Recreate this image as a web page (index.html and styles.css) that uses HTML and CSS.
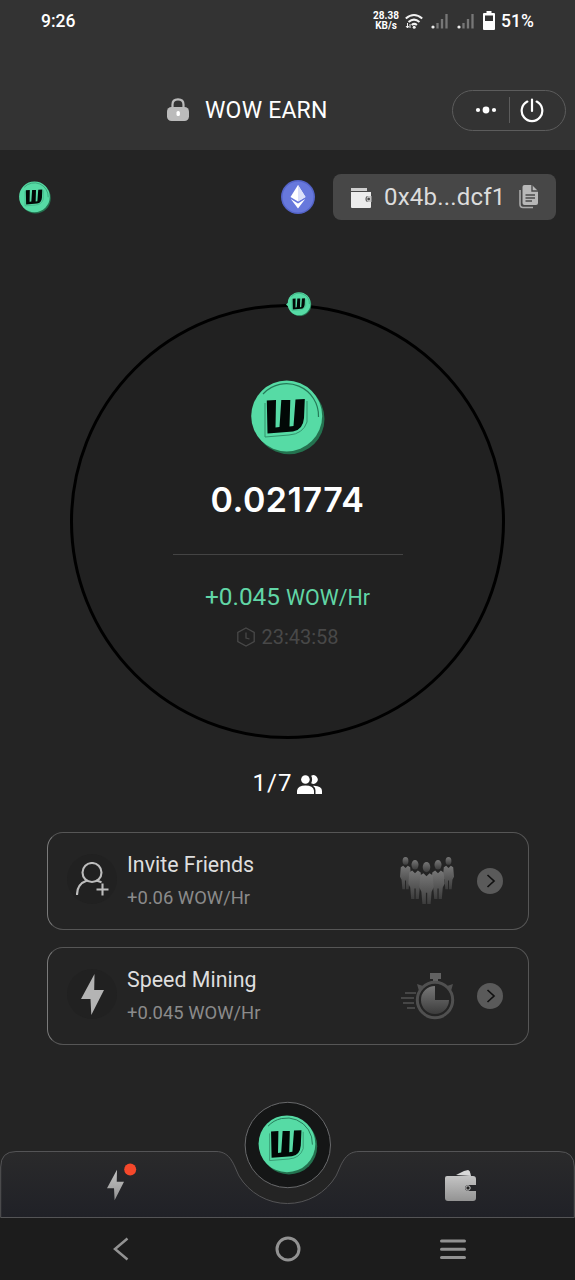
FILE: index.html
```
<!DOCTYPE html>
<html lang="en">
<head>
<meta charset="utf-8">
<title>WOW EARN</title>
<link rel="stylesheet" href="styles.css">
</head>
<body>
<svg class="defs" width="0" height="0" aria-hidden="true">
  <defs>
    <linearGradient id="fade" x1="0" y1="0" x2="0" y2="1"><stop offset="0" stop-color="#777"/><stop offset="1" stop-color="#3c3c3c"/></linearGradient>
    <linearGradient id="silver" x1="0" y1="0" x2="0" y2="1"><stop offset="0" stop-color="#c4c4c4"/><stop offset="1" stop-color="#939393"/></linearGradient>
    <linearGradient id="panel" x1="0" y1="0" x2="0" y2="1"><stop offset="0" stop-color="#2a2a2b"/><stop offset="1" stop-color="#202127"/></linearGradient>
    <symbol id="coin" viewBox="0 0 74 75">
      <circle cx="38.2" cy="39" r="35.3" fill="#24724f"/>
      <circle cx="35.7" cy="36" r="35.5" fill="#56dba5"/>
      <path d="M12 14A32 32 0 0 1 67.5 37" fill="none" stroke="#257a58" stroke-width="1.2"/>
      <path d="M14 23V57L38 55Q52 54 56 42V21" fill="none" stroke="#32916b" stroke-width="1"/>
      <path d="M15.8 20.5L25 20L24.5 47.5L28.5 47L30.3 20H39.3L38.5 46.5L42.5 46L44.5 19.5L53.8 19L53 38Q52 50 42 51.5L16.5 53.5Z" fill="#020806"/>
    </symbol>
    <symbol id="bolt" viewBox="0 0 23 41"><path d="M13.5 0L0 25H9.5L10.3 41L23 16H13.2Z"/></symbol>
    <symbol id="man" viewBox="0 0 14 42"><ellipse cx="7" cy="5" rx="3.7" ry="5"/><path d="M4 11L7 14L10 11L13 13L14 25L12 29L11 41H7.7V30H6.4V41H3L2 29L0 25L1 13Z"/></symbol>
    <symbol id="bars" viewBox="0 0 17 16"><circle cx="2" cy="14" r="1.6" fill="#eee"/><path d="M6.5 15.5V10M11 15.5V6M15.5 15.5V1" stroke="#777" stroke-width="2.3"/></symbol>
  </defs>
</svg>
<header class="top">
  <div class="status">
    <span class="time">9:26</span>
    <span class="rate"><span>28.38</span><span>KB/s</span></span>
    <svg class="wifi" viewBox="0 0 18 17" width="18" height="17"><path d="M.8 5.5Q9-1.5 17.2 5.5M3.5 9Q9 4.2 14.5 9M6.7 12Q9.3 9.8 11.9 12" fill="none" stroke="#f2f2f2" stroke-width="2"/><circle cx="9.2" cy="14.3" r="1.5" fill="#f2f2f2"/><path d="M2.5 10V15M1 13L2.5 15L4 13M5 15V11" fill="none" stroke="#f2f2f2"/></svg>
    <svg class="sig" width="17" height="16"><use href="#bars"/></svg>
    <svg class="sig two" width="17" height="16"><use href="#bars"/></svg>
    <svg class="battery" viewBox="0 0 12 19" width="12" height="19"><path d="M3.5 0H8.5V2H11Q12 2 12 3V18Q12 19 11 19H1Q0 19 0 18V3Q0 2 1 2H3.5Z" fill="#fff"/><path d="M2 4.5H10V10H2Z" fill="#333"/></svg>
    <span class="percent">51%</span>
  </div>
  <div class="title">
    <svg class="lock" viewBox="0 0 22 24" width="22" height="24"><path d="M5.5 11V6.5Q5.5 1.3 11 1.3T16.5 6.5V11" fill="none" stroke="#bbb" stroke-width="2.2"/><rect y="9" width="22" height="14" rx="4.5" fill="#bbb"/><rect x="9.5" y="13" width="3.4" height="5" rx="1.5" fill="#fff"/></svg>
    <h1>WOW EARN</h1>
    <div class="capsule">
      <svg viewBox="0 0 22 10" width="22" height="10" fill="#fff"><circle cx="3" cy="5" r="2.1"/><circle cx="11" cy="5" r="3.4"/><circle cx="19" cy="5" r="2.1"/></svg>
      <i></i>
      <svg viewBox="0 0 24 25" width="24" height="25" fill="none" stroke="#fff" stroke-width="2.2" stroke-linecap="round"><path d="M7.3 3.6A10.3 10.3 0 1 0 16.7 3.6M12 1.5V13"/></svg>
    </div>
  </div>
</header>
<main>
  <div class="account">
    <svg class="brand" width="32" height="33"><use href="#coin"/></svg>
    <svg class="eth" viewBox="0 0 34 34" width="34" height="34"><circle cx="17" cy="17" r="17" fill="#5363c7"/><circle cx="17" cy="17" r="15.5" fill="#6778dc"/><path d="M17 5L24.5 17L17 21.5L9.5 17Z" fill="#fff"/><path d="M17 5V21.5L24.5 17Z" fill="#dce1fa"/><path d="M9.8 19L17 23.5L24.2 19L17 28.5Z" fill="#fff"/></svg>
    <div class="address">
      <svg viewBox="0 0 21 21" width="21" height="21"><path d="M0 1H16V4H0Z" fill="#cfcfcf"/><path d="M0 5H20V9H17Q14.5 9 14.5 12T17 15H20V20Q20 21 19 21H1Q0 21 0 20Z" fill="#ececec"/><path d="M20.5 9H17.5Q15.5 9 15.5 12T17.5 15H20.5Z" fill="#c5c5c5"/><circle cx="17.7" cy="12" r="1.3" fill="#474747"/></svg>
      <span>0x4b...dcf1</span>
      <svg viewBox="0 0 19 24" width="19" height="24"><path d="M1 5V19Q1 22.5 4 22.5H14" fill="none" stroke="#aaa" stroke-width="1.6"/><path d="M5.5 0H13L19 6V18Q19 20 17 20H5.5Q3.5 20 3.5 18V2Q3.5 0 5.5 0Z" fill="#b8b8b8"/><path d="M13 0V6H19M6.5 10H16M6.5 13H16M6.5 16H13" fill="none" stroke="#4a4a4a" stroke-width="1.4"/></svg>
    </div>
  </div>
  <section class="ring">
    <svg class="marker" viewBox="0 0 26 25" width="26" height="25"><path d="M0 12.5L4 9V16Z" fill="#56dba5"/><use href="#coin" x="1.5" y="0" width="24" height="24.5"/></svg>
    <svg class="coin" width="74" height="75"><use href="#coin"/></svg>
    <div class="balance">0.021774</div>
    <div class="rule"></div>
    <div class="speed">+0.045 <small>WOW/Hr</small></div>
    <div class="clock"><svg viewBox="0 0 20 20" width="20" height="20" fill="none" stroke="#484848" stroke-width="1.3"><path d="M10 1L18.2 5.5V14.5L10 19L1.8 14.5V5.5Z"/><path d="M10 5.5V11L13.5 12"/></svg><span>23:43:58</span></div>
  </section>
  <div class="team"><span>1/7</span><svg viewBox="0 0 25 19" width="25" height="19" fill="#fff"><circle cx="8.4" cy="4.5" r="4.3"/><path d="M0 19V15.5Q1 10.5 8.5 10.5T17 15.5V19Z"/><path d="M14.2 .8A4.3 4.3 0 1 1 14.2 8.2Q16 4.5 14.2 .8ZM17 10.7Q25 11 25 16V19H18.5V15.5Q18.5 12.5 16 10.7Z"/></svg></div>
  <section class="cards">
    <article class="card">
      <div class="glyph"><svg viewBox="0 0 33 34" width="33" height="34" fill="none" stroke="#bdbdbd" stroke-width="2.1"><circle cx="16" cy="10.5" r="9.5"/><path d="M1 33Q1 22 11 18.5M20.5 18.5L25.5 20.3M20.5 27.5H32.5M26.5 21.5V33.5"/></svg></div>
      <div class="words"><h2>Invite Friends</h2><p>+0.06 WOW/Hr</p></div>
      <svg class="art" viewBox="0 0 55 48" width="55" height="48" fill="url(#fade)"><use href="#man" x="0" y="0" width="11" height="33"/><use href="#man" x="43" y="0" width="11" height="33"/><use href="#man" x="8" y="3" width="14" height="40"/><use href="#man" x="31" y="3" width="14" height="40"/><use href="#man" x="19" y="5" width="15" height="43"/></svg>
      <svg class="go" viewBox="0 0 26 26" width="26" height="26"><circle cx="13" cy="13" r="13" fill="#5a5a5a"/><path d="M10.5 7L17 13L10.5 19" fill="none" stroke="#111" stroke-width="1.7"/></svg>
    </article>
    <article class="card">
      <div class="glyph"><svg width="23" height="41" fill="#b4b4b4"><use href="#bolt"/></svg></div>
      <div class="words"><h2>Speed Mining</h2><p>+0.045 WOW/Hr</p></div>
      <svg class="art" viewBox="0 0 55 48" width="55" height="48"><path d="M5 21H16M1 26H14M3 31H14M7 36H15" stroke="#464646" stroke-width="2.2"/><path d="M30 1H41V7H38V11H33V7H30Z" fill="#626262"/><path d="M17 12L23 14L19 19ZM53 12L47 14L51 19Z" fill="#505050"/><circle cx="35" cy="28" r="17.7" fill="none" stroke="#505050" stroke-width="3"/><path d="M35 14A14 14 0 1 0 49 28H35Z" fill="url(#fade)"/></svg>
      <svg class="go" viewBox="0 0 26 26" width="26" height="26"><circle cx="13" cy="13" r="13" fill="#5a5a5a"/><path d="M10.5 7L17 13L10.5 19" fill="none" stroke="#111" stroke-width="1.7"/></svg>
    </article>
  </section>
</main>
<footer>
  <svg class="tabs" viewBox="0 0 575 117" width="575" height="117">
    <path d="M.7 116.5V66Q.7 50.5 16 50.5H216C231 50.5 234 65 239 75A56.5 56.5 0 0 0 336 75C341 65 344 50.5 359 50.5H559Q574.3 50.5 574.3 66V116.5Z" fill="url(#panel)" stroke="#545456"/>
    <circle cx="287.8" cy="44" r="42.7" fill="#151616" stroke="#68696b"/>
    <use href="#coin" x="258" y="14" width="60" height="60"/>
    <use href="#bolt" x="107" y="68" width="17" height="32" fill="url(#silver)"/>
    <circle cx="130.2" cy="68.5" r="6" fill="#f5482b"/>
    <path d="M456 74L464 70L468 69Q470 69 471 75Z" fill="#d8d8d8"/>
    <path d="M447 75H473Q476 75 476 78V84H469Q465 84 465 87T469 90H476V97Q476 100 473 100H448Q445 100 445 97V77Q445 75 447 75Z" fill="url(#silver)"/>
    <circle cx="468" cy="87" r="2.2" fill="#222" stroke="#c8c8c8" stroke-width="1"/>
  </svg>
  <nav>
    <svg viewBox="0 0 18 24" width="18" height="24"><path d="M15.5 1.5L3 12L15.5 22.5" fill="none" stroke="#929292" stroke-width="2.5"/></svg>
    <svg class="home" viewBox="0 0 26 26" width="26" height="26"><circle cx="13" cy="13" r="11" fill="none" stroke="#929292" stroke-width="3"/></svg>
    <svg viewBox="0 0 26 21" width="26" height="21"><path d="M1.5 2H24.5M1.5 10.3H24.5M1.5 18.6H24.5" stroke="#929292" stroke-width="3" stroke-linecap="round"/></svg>
  </nav>
</footer>
</body>
</html>
```
FILE: styles.css
```
* { box-sizing: border-box; }
body { margin: 0; width: 575px; height: 1280px; display: flex; flex-direction: column; overflow: hidden; background: #242424; color: #fff; font-family: Roboto, sans-serif; }
svg { display: block; flex: none; }
h1, h2, p { margin: 0; font-weight: 400; }
.defs { height: 0; }
.top { height: 150px; flex: none; background: #333; }
.status { height: 42px; padding-left: 41px; display: flex; align-items: center; }
.time { width: 331px; font-size: 17.5px; font-weight: 500; }
.rate { width: 28px; display: flex; flex-direction: column; align-items: center; font-size: 10px; line-height: 10px; font-weight: 700; }
.wifi { margin-left: 5px; }
.sig { margin-left: 8px; }
.sig.two { margin-left: 9px; }
.battery { margin-left: 9px; margin-top: -2px; }
.percent { margin-left: 6px; font-size: 17.5px; font-weight: 500; }
.title { height: 42px; margin-top: 47px; padding: 0 9px 0 167px; display: flex; align-items: center; }
.lock { margin-right: 16px; }
h1 { font-size: 23px; line-height: 40px; letter-spacing: .2px; padding-top: 1px; }
.capsule { width: 114px; height: 41px; margin-left: auto; border: 1px solid #5c5c5c; border-radius: 21px; display: flex; align-items: center; padding-left: 22px; }
.capsule i { width: 1px; height: 26px; margin: 0 10px 0 12px; background: #5c5c5c; }
main { height: 951px; flex: none; padding-top: 24px; }
.account { height: 46px; padding: 0 19px; display: flex; align-items: center; }
.eth { margin: 0 18px 0 auto; }
.address { width: 223px; height: 46px; border-radius: 8px; background: #474747; color: #dcdcdc; display: flex; align-items: center; padding: 0 18px; font-size: 24px; }
.address span { margin: 0 auto 0 12px; letter-spacing: .2px; }
.ring { position: relative; width: 435px; height: 435px; margin: 84px auto 0; border: 3px solid #000; border-radius: 50%; background: #212121; display: flex; flex-direction: column; align-items: center; }
.marker { position: absolute; left: 213px; top: -15px; }
.coin { margin-top: 73px; }
.balance { margin-top: 26px; font: 600 34px/38px Inter, sans-serif; letter-spacing: .5px; }
.rule { width: 230px; height: 1px; margin-top: 35px; background: #444; }
.speed { margin-top: 27px; color: #61d6a6; font-size: 24.4px; line-height: 30px; }
.speed small { font-size: 21.4px; }
.clock { margin-top: 13px; height: 22px; display: flex; align-items: center; gap: 5px; color: #484848; font-size: 20px; line-height: 22px; }
.team { height: 30px; margin-top: 30px; display: flex; align-items: center; justify-content: center; gap: 6px; font-size: 24px; letter-spacing: 1px; }
.team span { margin: -2px -1px 0 0; }
.cards { display: grid; gap: 17px; margin: 33px 46px 0 47px; }
.card { height: 98px; border: 1px solid #565656; border-left-color: #7a7a7a; border-radius: 16px; display: flex; align-items: center; padding: 0 25px 0 20px; }
.glyph { width: 50px; height: 50px; margin: -4px 1px 0 -1px; border-radius: 50%; background: #212121; display: flex; align-items: center; justify-content: center; }
.words { margin: -3px auto 0 9px; }
h2 { color: #dedede; font-size: 21.4px; line-height: 30px; }
.words p { color: #8b8b8b; font-size: 18.4px; line-height: 22px; margin-top: 7px; }
.art { margin: 0 22px 0 0; }
footer { height: 179px; flex: none; background: #242424; }
nav { height: 62px; background: #1c1c1c; display: flex; align-items: center; justify-content: space-between; padding: 0 109px 0 112px; }
.home { margin-left: 5px; }
```
